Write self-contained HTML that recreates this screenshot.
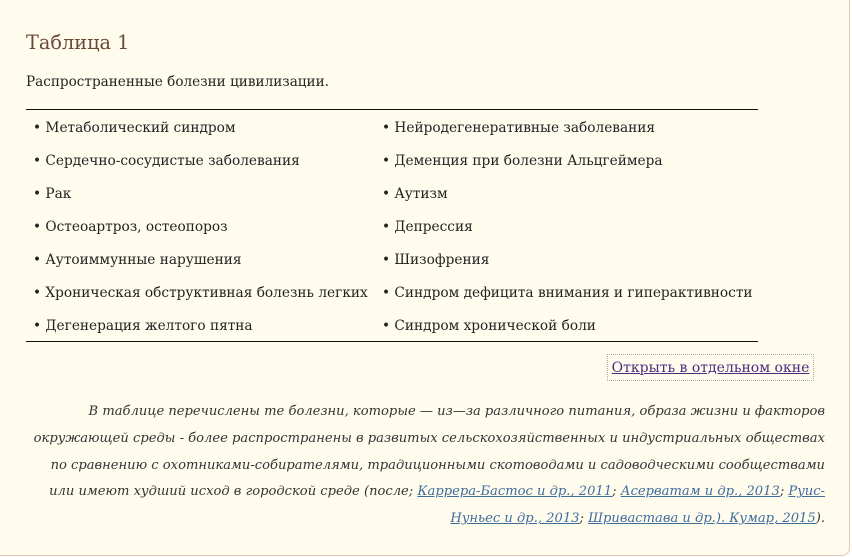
<!DOCTYPE html>
<html><head><meta charset="utf-8"><style>
html,body{margin:0;padding:0;background:#fff;}
body{width:852px;height:557px;overflow:hidden;font-family:"DejaVu Serif","Liberation Serif",serif;color:#222;}
.box{position:absolute;left:-10px;top:-10px;width:858px;height:564px;background:#fffcee;border:1px solid #e2c9b4;border-radius:8px;}
.t{position:absolute;left:26px;top:31px;font-size:19.3px;color:#6b4a35;}
.c{position:absolute;left:26px;top:74px;font-size:13.6px;}
.hr{position:absolute;left:26px;width:732px;height:0;border-top:1.5px solid #111;}
.r{position:absolute;font-size:13.7px;white-space:nowrap;margin-top:1px;}
.lk{position:absolute;left:607px;top:354px;width:205px;height:25px;border:1.5px dotted #aaa;font-size:14px;line-height:27px;text-align:center;}
.lk a{color:#4b2b80;text-decoration:underline;}
.n{position:absolute;left:0px;top:399px;width:825px;text-align:right;font-style:italic;font-size:13.1px;line-height:26.8px;color:#333;white-space:nowrap;}
.n a{color:#3f6c9c;text-decoration:underline;}
</style></head><body>
<div class="box"></div>
<div class="t">Таблица 1</div>
<div class="c">Распространенные болезни цивилизации.</div>
<div class="hr" style="top:109px"></div>
<div class="hr" style="top:341px"></div>
<div class="r" style="left:33px;top:119px">• Метаболический синдром</div>
<div class="r" style="left:33px;top:152px">• Сердечно-сосудистые заболевания</div>
<div class="r" style="left:33px;top:185px">• Рак</div>
<div class="r" style="left:33px;top:218px">• Остеоартроз, остеопороз</div>
<div class="r" style="left:33px;top:251px">• Аутоиммунные нарушения</div>
<div class="r" style="left:33px;top:284px">• Хроническая обструктивная болезнь легких</div>
<div class="r" style="left:33px;top:317px">• Дегенерация желтого пятна</div>
<div class="r" style="left:382px;top:119px">• Нейродегенеративные заболевания</div>
<div class="r" style="left:382px;top:152px">• Деменция при болезни Альцгеймера</div>
<div class="r" style="left:382px;top:185px">• Аутизм</div>
<div class="r" style="left:382px;top:218px">• Депрессия</div>
<div class="r" style="left:382px;top:251px">• Шизофрения</div>
<div class="r" style="left:382px;top:284px">• Синдром дефицита внимания и гиперактивности</div>
<div class="r" style="left:382px;top:317px">• Синдром хронической боли</div>
<div class="lk"><a>Открыть в отдельном окне</a></div>
<div class="n">В таблице перечислены те болезни, которые — из—за различного питания, образа жизни и факторов<br>окружающей среды - более распространены в развитых сельскохозяйственных и индустриальных обществах<br>по сравнению с охотниками-собирателями, традиционными скотоводами и садоводческими сообществами<br>или имеют худший исход в городской среде (после; <a>Каррера-Бастос и др., 2011</a>; <a>Асерватам и др., 2013</a>; <a>Руис-</a><br><a>Нуньес и др., 2013</a>; <a>Шривастава и др.). Кумар, 2015</a>).</div>
</body></html>
